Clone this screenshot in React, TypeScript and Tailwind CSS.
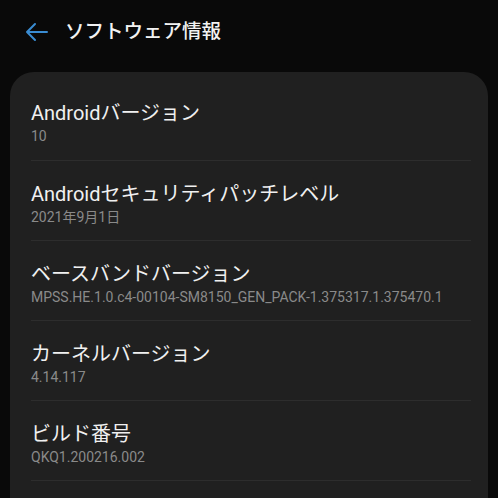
import React from "react";

const rows = [
  { title: "Androidバージョン", value: "10" },
  { title: "Androidセキュリティパッチレベル", value: "2021年9月1日" },
  {
    title: "ベースバンドバージョン",
    value: "MPSS.HE.1.0.c4-00104-SM8150_GEN_PACK-1.375317.1.375470.1",
  },
  { title: "カーネルバージョン", value: "4.14.117" },
  { title: "ビルド番号", value: "QKQ1.200216.002" },
];

export default function App() {
  return (
    <div
      className="w-[498px] h-[498px] overflow-hidden bg-[#090909] flex flex-col"
      style={{ fontFamily: "Roboto, 'Noto Sans CJK JP', sans-serif" }}
    >
      <div className="h-[72px] shrink-0 flex flex-row items-center pl-[25px] pb-[8px]">
        <svg width="24" height="24" viewBox="0 0 24 24" fill="none">
          <path
            d="M22 12H2M10 4L2 12L10 20"
            stroke="#3a8cd2"
            strokeWidth="2"
            strokeLinecap="round"
            strokeLinejoin="round"
          />
        </svg>
        <h1 className="ml-[16px] text-[19.5px] font-medium text-[#f2f2f2]">
          ソフトウェア情報
        </h1>
      </div>
      <div className="mx-[10px] flex-1 min-h-0 overflow-hidden bg-[#202020] rounded-t-[24px] pt-[8px] pl-[21px] pr-[17px]">
        {rows.map((r, i) => (
          <div
            key={i}
            className={`h-[80px] flex flex-col pt-[20px] ${
              i > 0 ? "border-t border-[#2d2d2d]" : ""
            }`}
          >
            <p className="text-[20px] leading-[26px] text-[#f0f0f0]">
              {r.title}
            </p>
            <p className="text-[14px] leading-[20px] text-[#8a8a8a]">
              {r.value}
            </p>
          </div>
        ))}
        <div className="border-t border-[#2d2d2d]" />
      </div>
    </div>
  );
}
